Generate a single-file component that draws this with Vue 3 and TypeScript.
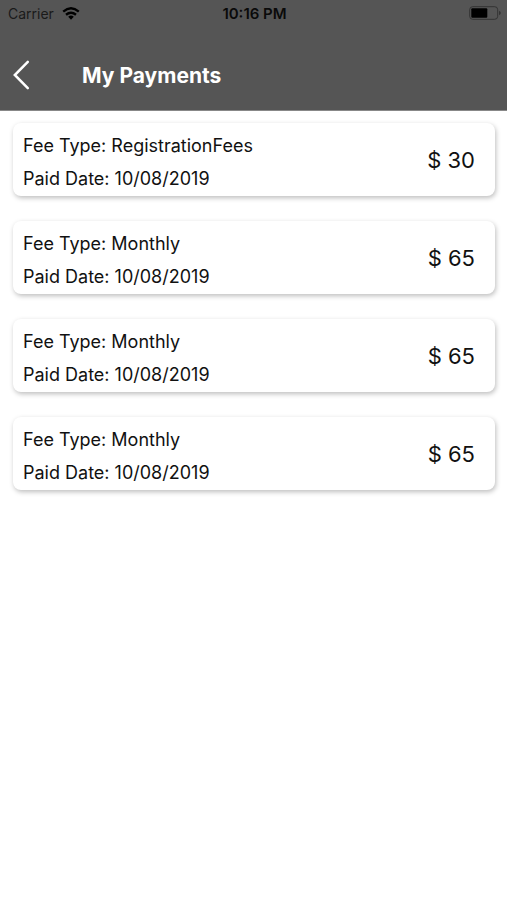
<script setup lang="ts">
interface Payment {
  id: number
  feeType: string
  paidDate: string
  amount: number
}

const payments: Payment[] = [
  { id: 1, feeType: 'RegistrationFees', paidDate: '10/08/2019', amount: 30 },
  { id: 2, feeType: 'Monthly', paidDate: '10/08/2019', amount: 65 },
  { id: 3, feeType: 'Monthly', paidDate: '10/08/2019', amount: 65 },
  { id: 4, feeType: 'Monthly', paidDate: '10/08/2019', amount: 65 },
]
</script>

<template>
  <div class="screen">
    <header class="header">
      <div class="status">
        <div class="carrier">
          <span>Carrier</span>
          <svg class="wifi" viewBox="0 0 18 13" aria-hidden="true">
            <path d="M1.2 4.6 Q9 -2 16.8 4.6" />
            <path d="M4 7.7 Q9 3.6 14 7.7" />
            <path class="dot" d="M6.2 9.8 Q9 7.4 11.8 9.8 L9 12.8 Z" />
          </svg>
        </div>
        <span class="time">10:16 PM</span>
        <div class="power">
          <svg class="battery" viewBox="0 0 32 14" aria-hidden="true">
            <rect class="shell" x="0.7" y="0.7" width="28" height="12.6" rx="3" />
            <rect class="charge" x="2.3" y="2.3" width="16" height="9.4" rx="1" />
            <path class="tip" d="M30 4.7 Q31.8 5.4 31.8 7 Q31.8 8.6 30 9.3 Z" />
          </svg>
        </div>
      </div>
      <div class="bar">
        <button class="back" type="button" aria-label="Back">
          <svg class="chevron" viewBox="0 0 18 30" aria-hidden="true">
            <path d="M15.8 1.8 L2.8 15 L15.8 28.2" />
          </svg>
        </button>
        <h1 class="title">My Payments</h1>
      </div>
    </header>
    <main class="list">
      <article v-for="p in payments" :key="p.id" class="card">
        <div class="details">
          <p class="line">Fee Type: {{ p.feeType }}</p>
          <p class="line">Paid Date: {{ p.paidDate }}</p>
        </div>
        <span class="amount">$ {{ p.amount }}</span>
      </article>
    </main>
  </div>
</template>

<style>
body {
  background: #fff;
}
</style>

<style scoped>
.screen {
  font-family: Inter, 'Liberation Sans', sans-serif;
  color: #111;
}
.header {
  background: #555;
  border-bottom: 1px solid #888;
}
.status {
  display: grid;
  grid-template-columns: 1fr auto 1fr;
  align-items: center;
  height: 26px;
  padding: 0 6px 0 8px;
  font-size: 14px;
}
.carrier {
  display: flex;
  align-items: center;
  gap: 8px;
  color: #1a1a1a;
}
.wifi {
  width: 18px;
  height: 13px;
  fill: none;
  stroke: #000;
  stroke-width: 2.4;
}
.wifi .dot {
  fill: #000;
  stroke: none;
}
.time {
  font-size: 15px;
  font-weight: 600;
  color: #0a0a0a;
}
.power {
  display: flex;
  justify-content: flex-end;
}
.battery {
  width: 32px;
  height: 14px;
}
.shell {
  fill: none;
  stroke: #333;
  stroke-width: 1;
}
.charge {
  fill: #000;
}
.tip {
  fill: #333;
}
.bar {
  display: flex;
  align-items: center;
  height: 84px;
  box-sizing: border-box;
  padding: 14px 12px 0;
}
.back {
  display: flex;
  align-items: center;
  width: 70px;
  height: 44px;
  padding: 0;
  border: 0;
  background: none;
}
.chevron {
  width: 18px;
  height: 30px;
  fill: none;
  stroke: #fff;
  stroke-width: 2.5;
  stroke-linecap: round;
}
.title {
  margin: 0;
  padding-top: 2px;
  font-size: 21px;
  line-height: 28px;
  font-weight: 700;
  color: #fff;
}
.list {
  display: flex;
  flex-direction: column;
  gap: 25px;
  padding: 12px 12px 12px 13px;
}
.card {
  display: flex;
  align-items: center;
  justify-content: space-between;
  padding: 0 20px 0 10px;
  border-radius: 8px;
  background: #fff;
  box-shadow: 1px 2px 5px rgba(0, 0, 0, 0.26);
}
.details {
  padding: 6px 0 1px;
}
.line {
  margin: 0;
  font-size: 18px;
  line-height: 33px;
}
.amount {
  font-size: 22px;
}
</style>
